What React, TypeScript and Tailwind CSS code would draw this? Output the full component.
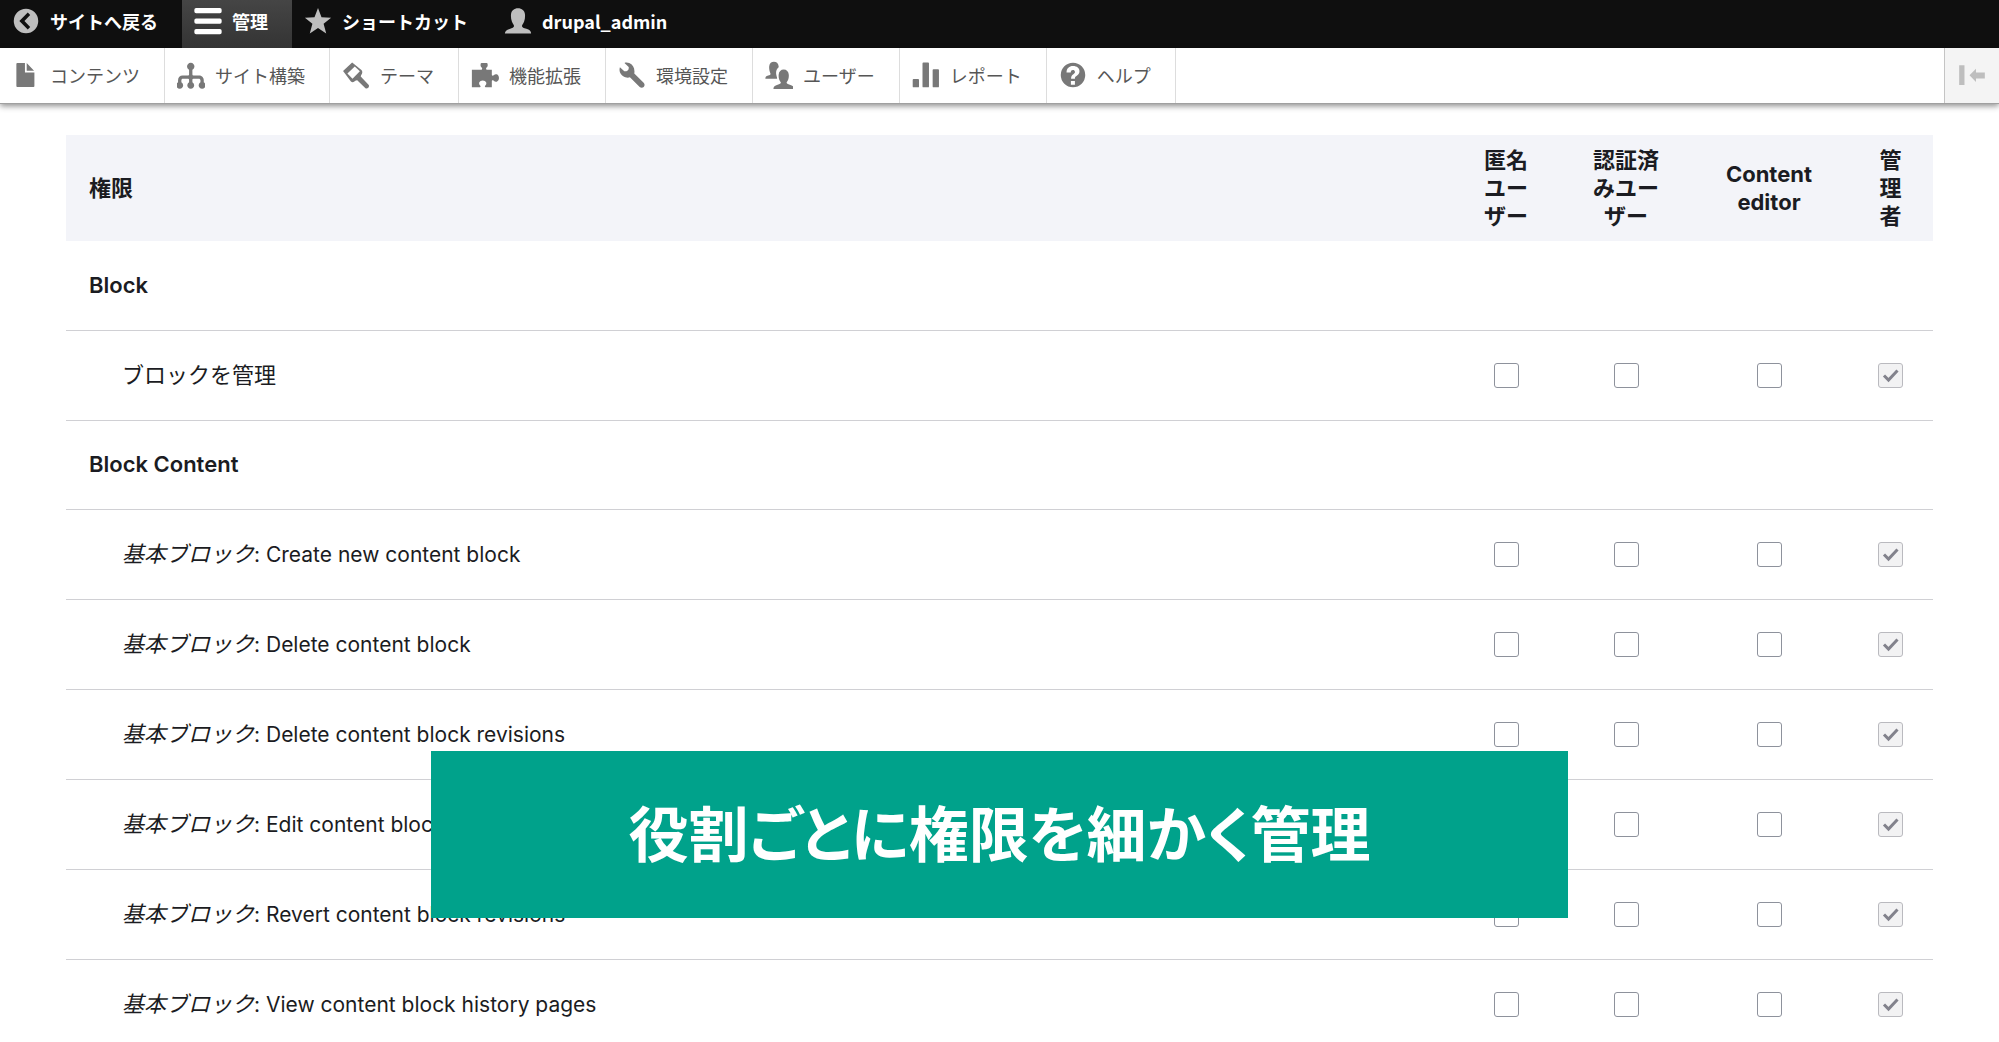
import { useState, type ReactNode } from "react";

const roles = ["匿名ユーザー", "認証済みユーザー", "Content editor", "管理者"];

function Icon({ d, box = "0 0 16 16" }: { d: string; box?: string }) {
  return (
    <svg viewBox={box} className="size-7" fill="currentColor" fillRule="evenodd" aria-hidden="true">
      <path d={d} />
    </svg>
  );
}

const icons = {
  back: "M8 1a7 7 0 1 0 0 14A7 7 0 0 0 8 1zm2.4 10.4-1.4 1.5L4.2 8 9 3.1l1.4 1.5L7.1 8z",
  menu: "M1.2 .6h13.6a1 1 0 0 1 1 1v.9a1 1 0 0 1-1 1H1.2a1 1 0 0 1-1-1v-.9a1 1 0 0 1 1-1zM1.2 6.6h13.6a1 1 0 0 1 1 1v.9a1 1 0 0 1-1 1H1.2a1 1 0 0 1-1-1v-.9a1 1 0 0 1 1-1zM1.2 12.6h13.6a1 1 0 0 1 1 1v.9a1 1 0 0 1-1 1H1.2a1 1 0 0 1-1-1v-.9a1 1 0 0 1 1-1z",
  star: "M8 .6l2 5.2 5.5.3-4.3 3.5 1.5 5.5L8 12l-4.7 3.1 1.5-5.5L.5 6.1 6 5.8z",
  user: "M.5 15.2c.1-1.400.9-2.200 2.700-2.700 1.600-.400 2.400-.800 2.500-1.500.1-.800-.700-1.300-1.200-2.700C4 7 3.900 5.500 4 4.300 4.200 2 5.800.7 8 .7s3.800 1.300 4 3.600c.1 1.200 0 2.700-.500 4-.500 1.400-1.300 1.900-1.200 2.700.1.700.9 1.100 2.500 1.500 1.800.500 2.600 1.300 2.700 2.700z",
  content: "M3 1.200h4.400v5.400h5.400v7.700a.5.5 0 0 1-.5.5H3a.5.5 0 0 1-.5-.5V1.700a.5.5 0 0 1 .5-.5zm5.400 0 4.200 4.400H8.400z",
  structure: "M15.300 12.200V11c0-1.700-1.300-2.700-2.700-2.700H9.400c-.4 0-.6-.2-.6-.6V5a2.100 2.100 0 1 0-1.900 0v2.700c0 .4-.2.600-.6.600H3.200C1.700 8.300.6 9.400.6 11v1.200a1.950 1.950 0 1 0 1.900 0V11c0-.6.300-.9.9-.9h2.900c.4 0 .6.200.6.600v1.500a1.950 1.950 0 1 0 1.900 0v-1.500c0-.4.200-.6.6-.6h3c.6 0 1 .4 1 .9v1.200a1.950 1.950 0 1 0 1.900 0z",
  theme: "M5.800.8.600 5.700l4.500 6c1 .8 2 .2 2.800-.5l.8-.2 4.700 4.600c1.300.5 2.400-.7 1.900-1.900L10.700 8.900l.2-.8c.8-1 1-2 .2-2.900zM7.300 3.100l2.900 2.700-4.200 4.300L3.100 7.200z",
  extend: "M6.200 5h-.1c.6-.7.2-1.100-.3-1.600-.5-.4-.3-1.100-.3-1.700 0-.4.400-.6.800-.6h2.400c.4 0 .8.200.8.600 0 .600.200 1.300-.3 1.700-.5.500-.9.900-.3 1.600h3v2.700c0 .7.500.9 1.100.4.500-.5 1.100-.7 1.700-.5 1.700.6 1.700 3.600 0 4.200-.6.200-1.200 0-1.700-.5-.6-.5-1.100-.3-1.100.4v3.300H8.600c-.7 0-.9-.5-.4-1 .5-.5.700-1.100.5-1.700-.6-1.600-3.400-1.600-4 0-.2.600 0 1.200.5 1.700.5.500.3 1-.4 1H.5V5z",
  config: "M14.800 12.600 9.300 7.100c.5-2.600-.7-5-2.900-5.900-.9-.4-2-.4-2.700-.1l2.400 2.300c.3 1.600-.7 2.600-2.500 2.500L1.100 3.600C.3 6 1.700 8.400 4.200 9.300c.9.300 1.900.3 2.600 0l5.600 5.600c1.700 1.200 3.600-.7 2.400-2.300z",
  people: "M6.900 10.100H.2c0-1 .5-1.500 1.600-1.800 1.100-.3 1.500-.5 1.300-1.200C2.400 5.600 2.300 4.200 2.400 3 2.600 1.200 3.700.4 5.100.4S7.600 1.200 7.800 3v.5C6.500 4.600 6.200 6 6.400 7.600c.1 1 .6 1.700.5 2.500zM4.800 16c0-1.400.8-2.100 2.400-2.500 1.400-.4 2-.6 1.800-1.300-1-1.300-1.300-2.900-1.200-4.300.1-2 1.300-3.100 2.900-3.100s2.800 1.100 2.900 3.100c.1 1.400-.2 3-1.200 4.300-.2.700.4.900 1.800 1.300 1.600.4 2.400 1.100 2.400 2.500z",
  reports: "M.9 10.300h2.600a.5.5 0 0 1 .5.5v3.700a.5.5 0 0 1-.5.5H.9a.5.5 0 0 1-.5-.5v-3.700a.5.5 0 0 1 .5-.5zM6.500.9h2.700a.5.5 0 0 1 .5.5v13.100a.5.5 0 0 1-.5.5H6.500a.5.5 0 0 1-.5-.5V1.400a.5.5 0 0 1 .5-.5zM12.300 4.700h2.600a.5.5 0 0 1 .5.5v9.300a.5.5 0 0 1-.5.5h-2.600a.5.5 0 0 1-.5-.5V5.200a.5.5 0 0 1 .5-.5z",
  help: "M8 1a7 7 0 1 0 0 14A7 7 0 0 0 8 1zm-1.200 10.400h2.300v2.100H6.800zm2.300-1.300H6.900c0-1.500.4-1.900 1.300-2.600.7-.500 1-.900.9-1.400-.1-.6-.5-.9-1.100-.9-.8 0-1.200.5-1.300 1.300H4.300C4.400 4.200 5.800 2.900 8 2.900c2.300 0 3.700 1.200 3.700 3 0 1.300-.7 2-1.700 2.700-.7.500-.9.700-.9 1.500z",
  dock: "M.8 2.300h3.600v13.500H.8zM12.200 4.800v2.500h6v4h-6v2.500L7.800 9.200z",
};

function BarItem({ icon, children, active }: { icon: string; children: ReactNode; active?: boolean }) {
  return (
    <button
      type="button"
      className={
        active
          ? "flex h-full items-start bg-linear-to-b from-[#454545] to-[#343434] pt-[7px] pr-6 leading-7 font-bold text-white"
          : "flex h-full items-start pt-[7px] pr-6 leading-7 font-bold text-white"
      }
    >
      <span className={active ? "w-[50px] pl-3 text-white" : "w-[50px] pl-3 text-[#bebebe]"}>
        <Icon d={icon} />
      </span>
      <span>{children}</span>
    </button>
  );
}

const tray: [string, string][] = [
  [icons.content, "コンテンツ"],
  [icons.structure, "サイト構築"],
  [icons.theme, "テーマ"],
  [icons.extend, "機能拡張"],
  [icons.config, "環境設定"],
  [icons.people, "ユーザー"],
  [icons.reports, "レポート"],
  [icons.help, "ヘルプ"],
];

function Section({ title }: { title: string }) {
  return (
    <tr className="h-[89px] border-b border-[#d0d0d4]">
      <th colSpan={5} scope="colgroup" className="px-[23px] text-left text-[22px] font-semibold">
        {title}
      </th>
    </tr>
  );
}

function Permission({ prefix, label }: { prefix?: string; label: string }) {
  const [granted, setGranted] = useState([false, false, false]);
  return (
    <tr className="h-[90px] border-b border-[#d0d0d4]">
      <td className="pl-14">
        {prefix && <em className="text-[22px]">{prefix}</em>}
        <span className={prefix ? "text-[21px]" : "text-[22px]"}>{prefix ? ": " + label : label}</span>
      </td>
      {roles.map((role, i) => (
        <td key={role} className="text-center">
          <span className="relative inline-block size-[25px] align-middle">
            <input
              type="checkbox"
              aria-label={`${role}: ${prefix ?? ""} ${label}`}
              disabled={i === 3}
              checked={i === 3 || granted[i]}
              onChange={() => setGranted(granted.map((g, n) => (n === i ? !g : g)))}
              className="peer block size-[25px] appearance-none rounded-[3px] border border-[#8e929c] bg-white disabled:border-[#bababf] disabled:bg-[#f2f2f3]"
            />
            <svg
              viewBox="0 0 25 25"
              className="pointer-events-none absolute inset-0 hidden peer-checked:block"
              fill="none"
              stroke="#82828c"
              strokeWidth="3"
              aria-hidden="true"
            >
              <path d="M6 12.500 10.500 17 19.500 7.500" />
            </svg>
          </span>
        </td>
      ))}
    </tr>
  );
}

export default function App() {
  return (
    <div
      lang="ja"
      className="relative h-screen overflow-hidden bg-white font-['Inter','Noto_Sans_CJK_JP',sans-serif] text-[#1b1c22]"
    >
      <header className="font-['Noto_Sans_CJK_JP',sans-serif] text-lg">
        <nav aria-label="ツールバー" className="flex h-12 items-center bg-[#0f0f0f]">
          <BarItem icon={icons.back}>サイトへ戻る</BarItem>
          <BarItem icon={icons.menu} active>
            管理
          </BarItem>
          <BarItem icon={icons.star}>ショートカット</BarItem>
          <BarItem icon={icons.user}>drupal_admin</BarItem>
        </nav>
        <nav
          aria-label="管理メニュー"
          className="flex h-14 border-b border-[#a0a0a0] bg-white shadow-[0_2px_6px_rgba(0,0,0,0.45)]"
        >
          {tray.map(([icon, label]) => (
            <a
              key={label}
              href="#"
              className="flex items-center border-r border-[#dddddd] pr-6 pb-0.5 leading-7 text-[#565656]"
            >
              <span className="w-[50px] pl-3 text-[#787878]">
                <Icon d={icon} />
              </span>
              {label}
            </a>
          ))}
          <button
            type="button"
            aria-label="縦向き"
            className="ml-auto flex w-[55px] items-center justify-center border-l border-[#c4c4c4] bg-[#f4f4f4] pb-0.5 text-[#bebebe]"
          >
            <Icon d={icons.dock} box="0 0 19 18" />
          </button>
        </nav>
      </header>

      <main className="px-[66px] pt-[31px]">
        <table className="w-full border-collapse">
          <thead>
            <tr className="h-[106px] bg-[#f3f4f9] text-[22px] leading-7 font-semibold">
              <th scope="col" className="px-[23px] text-left">権限</th>
              <th scope="col" className="w-[112px] px-[34px]">匿名ユーザー</th>
              <th scope="col" className="w-[128px] px-[30px]">認証済みユーザー</th>
              <th scope="col" className="w-[158px] px-[30px]">Content editor</th>
              <th scope="col" className="w-[85px] px-[31px]">管理者</th>
            </tr>
          </thead>
          <tbody>
            <Section title="Block" />
            <Permission label="ブロックを管理" />
            <Section title="Block Content" />
            <Permission prefix="基本ブロック" label="Create new content block" />
            <Permission prefix="基本ブロック" label="Delete content block" />
            <Permission prefix="基本ブロック" label="Delete content block revisions" />
            <Permission prefix="基本ブロック" label="Edit content block" />
            <Permission prefix="基本ブロック" label="Revert content block revisions" />
            <Permission prefix="基本ブロック" label="View content block history pages" />
          </tbody>
        </table>
      </main>

      <div className="absolute inset-x-[431px] bottom-[124px] flex h-[167px] items-center justify-center bg-[#00a28b] pb-2 font-['Noto_Sans_CJK_JP',sans-serif] text-[60px] font-bold whitespace-nowrap text-white [font-feature-settings:'palt']">
        役割ごとに権限を細かく管理
      </div>
    </div>
  );
}
